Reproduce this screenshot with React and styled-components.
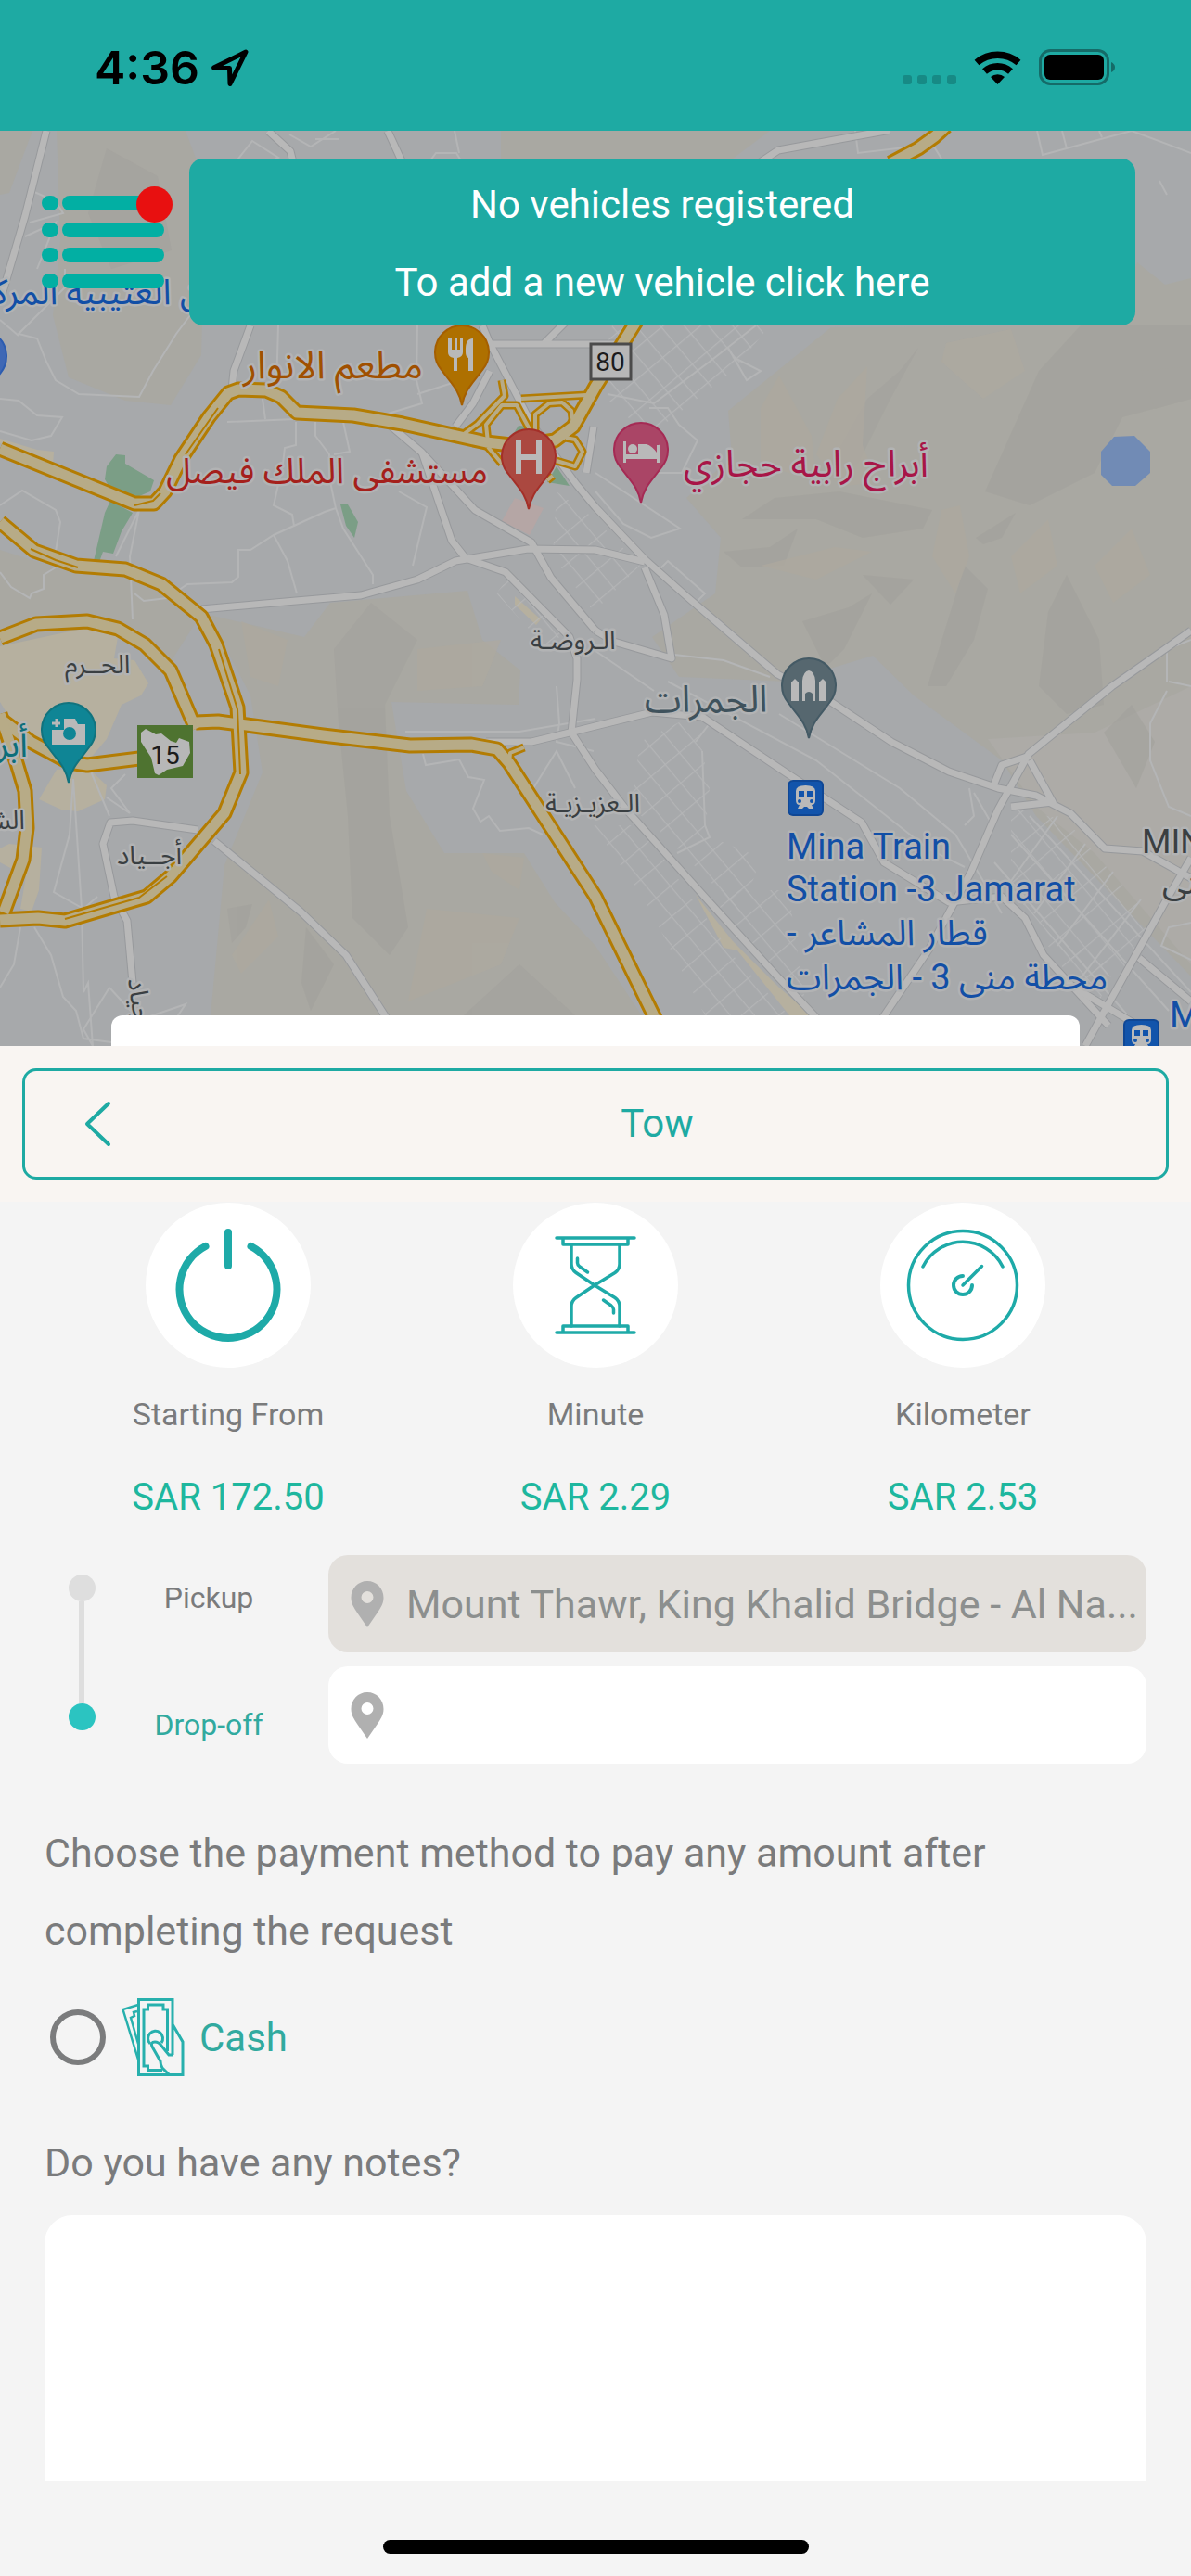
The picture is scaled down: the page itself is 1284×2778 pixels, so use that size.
import React, { useState } from "react";
import styled, { createGlobalStyle } from "styled-components";

const prices = [
    { id: "start", label: "Starting From", value: "SAR 172.50", icon: <PowerIcon /> },
    { id: "minute", label: "Minute", value: "SAR 2.29", icon: <HourglassIcon /> },
    { id: "km", label: "Kilometer", value: "SAR 2.53", icon: <GaugeIcon /> },
];

export default function App() {
    const [pickup] = useState("Mount Thawr, King Khalid Bridge - Al Na...");
    const [dropOff, setDropOff] = useState("");
    const [payment, setPayment] = useState("");
    const [notes, setNotes] = useState("");

    return (
        <>
            <GlobalStyle />
            <Page>
                <StatusBar />
                <MapArea>
                    <CityMap />
                    <MapTop>
                        <MenuButton type="button" aria-label="Menu">
                            <MenuIcon />
                        </MenuButton>
                        <Banner type="button">
                            <span>No vehicles registered</span>
                            <span>To add a new vehicle click here</span>
                        </Banner>
                    </MapTop>
                    <CardEdge />
                </MapArea>
                <ServiceHeader>
                    <ServiceBox>
                        <BackButton type="button" aria-label="Back">
                            <svg width="30" height="52" viewBox="0 0 30 52" fill="none" stroke="#1eaaa3" strokeWidth="4" strokeLinecap="round" strokeLinejoin="round">
                                <path d="M27 4 L4 26 L27 48" />
                            </svg>
                        </BackButton>
                        <ServiceName>Tow</ServiceName>
                    </ServiceBox>
                </ServiceHeader>
                <Prices>
                    {prices.map((price) => (
                        <Price key={price.id}>
                            <PriceIcon>{price.icon}</PriceIcon>
                            <PriceLabel>{price.label}</PriceLabel>
                            <PriceValue>{price.value}</PriceValue>
                        </Price>
                    ))}
                </Prices>
                <Route>
                    <Timeline>
                        <Dot />
                        <Line />
                        <Dot $active />
                    </Timeline>
                    <RouteLabels>
                        <label htmlFor="pickup">Pickup</label>
                        <ActiveLabel htmlFor="dropoff">Drop-off</ActiveLabel>
                    </RouteLabels>
                    <RouteFields>
                        <Field $filled>
                            <PlaceIcon />
                            <input id="pickup" type="text" value={pickup} readOnly />
                        </Field>
                        <Field>
                            <PlaceIcon />
                            <input
                                id="dropoff"
                                type="text"
                                value={dropOff}
                                onChange={(e) => setDropOff(e.target.value)}
                            />
                        </Field>
                    </RouteFields>
                </Route>
                <Payment>
                    <legend>
                        Choose the payment method to pay any amount after completing the request
                    </legend>
                    <PaymentOption>
                        <input
                            type="radio"
                            name="payment"
                            value="cash"
                            checked={payment === "cash"}
                            onChange={(e) => setPayment(e.target.value)}
                        />
                        <CashIcon />
                        <span>Cash</span>
                    </PaymentOption>
                </Payment>
                <Notes>
                    <label htmlFor="notes">Do you have any notes?</label>
                    <textarea id="notes" value={notes} onChange={(e) => setNotes(e.target.value)} />
                </Notes>
                <HomeIndicator>
                    <span />
                </HomeIndicator>
            </Page>
        </>
    );
}

function StatusBar() {
    return (
        <Status>
            <StatusGroup>
                <Clock>4:36</Clock>
                <svg width="42" height="42" viewBox="0 0 42 42" fill="none" stroke="#000" strokeWidth="5" strokeLinejoin="round">
                    <path d="M38 4 L21 38.500 L20.500 21.500 L3.500 21 Z" />
                </svg>
            </StatusGroup>
            <StatusGroup>
                <svg width="230" height="42" viewBox="0 0 230 42">
                    <g fill="#178a85">
                        <rect x="1" y="29" width="10" height="10" rx="3" />
                        <rect x="17" y="29" width="10" height="10" rx="3" />
                        <rect x="33" y="29" width="10" height="10" rx="3" />
                        <rect x="49" y="29" width="10" height="10" rx="3" />
                    </g>
                    <g fill="none" stroke="#000" strokeWidth="7.500">
                        <path d="M81 15.500 A35 35 0 0 1 126 15.500" />
                        <path d="M89.500 25 A21.500 21.500 0 0 1 117.500 25" />
                    </g>
                    <path d="M96 31 A12 12 0 0 1 111 31 L103.500 39 Z" fill="#000" />
                    <rect x="149.500" y="2.500" width="73" height="36" rx="11" fill="none" stroke="#156b68" strokeWidth="3" />
                    <rect x="154" y="7" width="64" height="27" rx="6" fill="#000" />
                    <path d="M226 15 Q230 17 230 20.500 Q230 24 226 26 Z" fill="#156b68" />
                </svg>
            </StatusGroup>
        </Status>
    );
}

function MenuIcon() {
    return (
        <svg width="144" height="114" viewBox="0 0 144 114">
            {[10, 39, 66, 94].map((y) => (
                <g key={y} fill="#02afa3">
                    <rect x="0" y={y} width="18" height="16" rx="8" />
                    <rect x="22" y={y} width="110" height="16" rx="8" />
                </g>
            ))}
            <circle cx="121.500" cy="19.500" r="19.500" fill="#e81010" />
        </svg>
    );
}

function PowerIcon() {
    return (
        <svg viewBox="0 0 178 178" fill="none" stroke="#1eaaa8" strokeWidth="8" strokeLinecap="round">
            <path d="M64.500 47 A52.500 52.500 0 1 0 113.500 47" />
            <path d="M89 32 V68" />
        </svg>
    );
}

function HourglassIcon() {
    return (
        <svg viewBox="0 0 178 178" fill="none" stroke="#1eaaa8" strokeWidth="3.500" strokeLinecap="round" strokeLinejoin="round">
            <path d="M47 38 H131 M54 38 V45 H124 V38" />
            <path d="M47 140 H131 M54 140 V133 H124 V140" />
            <path d="M63 45 V66 Q63 72 68 75.500 L88 89 L68 102.500 Q63 106 63 112 V133" />
            <path d="M115 45 V66 Q115 72 110 75.500 L88 89 L110 102.500 Q115 106 115 112 V133" />
            <path d="M69.500 60 V65 Q69.500 67 72 69 L80.500 75" />
            <path d="M97.500 105 L106 111 Q108.500 113 108.500 115 V119" />
        </svg>
    );
}

function GaugeIcon() {
    return (
        <svg viewBox="0 0 178 178" fill="none" stroke="#1eaaa8" strokeWidth="3.500" strokeLinecap="round">
            <circle cx="89" cy="89" r="58.500" />
            <path d="M46 69 A48 48 0 0 1 132 69" />
            <path d="M89 79 A10 10 0 1 0 99 89" strokeWidth="4" />
            <path d="M89 89 L109.500 68.500" />
        </svg>
    );
}

function PlaceIcon() {
    return (
        <svg width="36" height="50" viewBox="0 0 36 50">
            <path
                d="M18 0 C8 0 0.500 8 0.500 18 C0.500 25 4 29 7 34 L18 50 L29 34 C32 29 35.500 25 35.500 18 C35.500 8 28 0 18 0 Z M18 11 A6.500 6.500 0 1 1 18 24 A6.500 6.500 0 1 1 18 11 Z"
                fill="#b0b0b0"
                fillRule="evenodd"
            />
        </svg>
    );
}

function CashIcon() {
    return (
        <svg width="68" height="84" viewBox="0 0 68 84" fill="none" stroke="#27b0ad" strokeWidth="3">
            <path d="M18 7 L1.500 12 L18 66" strokeWidth="2.500" />
            <path d="M17 14 L13 15 L14 19 L10 21 L18 49" strokeWidth="2.500" />
            <path d="M55 61 V1.500 H18.500 V82.500 H66 V47 L55 28" />
            <path d="M49.500 57 V12 H45 V7 H28.500 V12 H24 V73 H28.500 V77.500 H44" />
            <path d="M31 49 A8 8 0 1 1 43 48" />
            <path d="M51 82 L44 75 Q42 72 42 68 L33 52 Q31 47 36 47 Q40 47 43 51 L51 61 H55" />
        </svg>
    );
}

const cityBlocks = [
    "M660 351 L642 420 L700 470 L790 400 L830 351 Z",
    "M600 530 L642 560 L690 610 L640 660 L596 600 Z",
    "M690 800 L750 770 L765 850 L760 900 L820 925 L800 985 L720 905 L680 870 Z",
    "M550 620 L610 680 L590 700 L535 640 Z",
    "M640 890 L690 890 L790 1030 L850 1095 L760 1095 L700 980 Z",
    "M750 960 L850 960 L870 1095 L830 1040 Z",
    "M1090 870 L1150 885 L1240 990 L1210 1060 L1150 1030 L1090 960 Z",
    "M1120 1000 L1200 1040 L1180 1095 L1130 1020 Z",
];

const hills = [
    "M990 375 L960 430 L925 500 L890 510 L935 430 L970 400 Z",
    "M1120 400 L1165 351 L1284 351 L1284 430 L1210 450 L1180 510 L1110 545 L1062 530 Z",
    "M835 537 L905 530 L1005 550 L995 570 L930 580 L880 560 L800 560 Z",
    "M1052 580 L1095 553 L1080 580 L1060 587 Z",
    "M930 620 L985 625 L960 652 Z",
    "M1040 610 L1065 635 L1050 690 L1020 740 L1000 740 Z",
    "M1150 620 L1185 690 L1190 760 L1150 770 L1120 740 L1130 660 Z",
    "M865 670 L915 655 L940 640 L910 700 L890 720 Z",
    "M360 700 L400 650 L450 690 L415 760 L420 880 L440 1000 L420 1030 L380 990 L375 880 L365 780 Z",
    "M245 980 L272 975 L265 1000 L250 1017 Z",
    "M330 1000 L360 1040 L335 1090 L325 1060 Z",
    "M115 160 L170 190 L185 270 L120 290 L95 230 Z",
    "M500 1095 L560 1040 L620 1095 Z",
    "M1230 400 L1284 395 L1284 430 L1245 441 Z",
    "M780 595 L830 590 L860 570 L845 610 L800 612 Z",
    "M1220 760 L1245 800 L1225 850 L1190 790 Z",
];

const ridges = [
    "M903 430 L935 395 L930 480 L945 520 L905 525 L880 490 Z",
    "M820 440 L840 405 L875 470 L880 520 L820 500 Z",
    "M1020 370 L1090 355 L1105 400 L1060 430 L1015 390 Z",
    "M820 610 L900 590 L940 595 L880 625 Z",
    "M1015 550 L1035 545 L1045 600 L1030 640 L1005 600 Z",
    "M1090 600 L1130 560 L1140 610 L1100 640 Z",
    "M1180 610 L1220 570 L1240 620 L1200 650 Z",
    "M260 670 L310 690 L300 740 L270 730 Z",
    "M450 700 L540 690 L520 740 L450 745 Z",
    "M250 1030 L290 970 L300 1010 L260 1050 Z",
    "M460 980 L560 990 L540 1040 L440 1080 Z",
    "M520 920 L565 925 L560 960 L530 940 Z",
];

const streets = [
    "M37 207 L60 217 L68 230 L32 240 M27 255 L60 240 L40 290 M70 290 L70 310 L20 360 L40 365 L50 390 L60 410 L85 425 L150 428 L165 400 L190 360 L205 340",
    "M0 345 L20 362 M250 180 L272 152 L300 170 L280 180 Z M312 145 L335 158 L362 141 M340 150 L365 150 M455 185 L470 165 L492 165 L510 195 M490 141 L495 165",
    "M0 430 L20 432 L40 448 L67 450 L55 470 L34 475 L0 465 M0 545 L24 529 L60 550 L65 563 L60 595",
    "M245 455 L318 452 M286 452 L283 430 M300 351 L298 420 M450 351 L449 410 L455 435 L405 450 M450 425 L497 410",
    "M319 455 L319 480 L307 483 L305 500 L295 545 L315 555 L317 567 L295 577 L310 605 L320 640 M340 455 L340 470 L355 490 L355 515 L362 548 L350 552 L295 577 L270 593 L257 593 L257 622 L250 628 L202 630 L180 645 L155 648 L145 640",
    "M370 455 L377 487 L360 490 M362 548 L370 570 L402 620 L402 630 M430 530 L460 547 L445 610 M150 550 L140 600 L143 668 M125 600 L150 550 M0 617 L12 633 L32 645 L34 640 L47 635 L47 620 L60 612",
    "M79 840 L75 900 L58 962 L90 980 L105 967 M79 840 L88 980 L90 1070 L95 1060 L100 1128 M98 832 L118 880 M115 860 L140 877 L120 850 L135 835 M22 1000 L15 1040 L0 1065 M37 1000 L55 1030 L68 1075 L82 1090 L90 1120 L120 1124 M118 1065 L90 1110 L100 1128 M118 1065 L150 1100 L200 1083 L170 1128",
    "M437 789 L560 789 L642 775 M456 813 L459 825 L495 819 L505 838 L522 841 L510 872 L518 886 L527 880 L539 896 L570 893 L585 900 M575 850 L600 810 L620 850 M600 740 L603 780 L600 800 L640 810",
    "M655 425 L705 435 L765 390 L815 351 M790 385 L820 400 L805 410 L785 375 M700 440 L720 440 L732 458 L752 475 L735 510 L705 510 M642 510 L733 570 L702 580 L672 565 L642 530 M720 605 L760 640 L750 650 L710 615 Z",
    "M642 702 L705 745 M727 706 L780 712 L830 730 M720 735 L880 820 L1000 915 L1040 935 M750 800 L765 780 M757 810 L760 890 L765 903 L730 920",
    "M1258 735 L1258 700 L1284 690 M1258 745 L1240 780 L1240 820 L1260 870 L1284 880 M1260 735 L1284 740 M1284 995 L1260 1000 L1252 1020 L1284 1035",
    "M1050 855 L1070 890 L1040 950 M1040 890 L1050 880 L1045 850 M1110 880 L1284 1070 M1090 900 L1260 1090 M1072 930 L1220 1100 M1140 880 L1090 950 M1170 910 L1115 985 M1200 940 L1140 1020 M1230 970 L1165 1055",
    "M922 141 L925 165 L1010 155 M1118 141 L1124 167 L1220 141 L1284 165 M1145 141 L1150 160 M1185 141 L1188 148 M1005 155 L1015 171 M1250 195 L1258 210",
    "M840 770 L970 850 L1030 900 L1060 950 L1080 985",
];

const majorRoads = [
    "M520 351 L528 370 L573 457 L622 523 L642 547 L695 603 L740 643 L838 727 L896 757 L961 800 L1023 832 L1076 850 L1117 858 L1154 877 L1191 915 L1232 918 L1284 947",
    "M528 371 H680 M586 371 L612 345",
    "M422 460 L455 488 L512 550 L573 585 L594 623 L642 680",
    "M455 488 L487 583 L502 602 L545 617 L614 687 L622 710 L622 733 L616 790 L642 830 L675 873 L765 973 L838 1053 L892 1110",
    "M217 657 L319 648 L389 642 L450 625 L491 605 L569 592 L642 593 L695 606",
    "M270 351 L252 400 L250 420",
    "M528 400 L510 435 L491 460",
    "M50 141 L27 233 L0 325",
    "M289 141 L313 163 L316 175 M418 141 L436 180",
    "M818 176 L839 162 L960 140",
    "M213 895 L143 885 L119 887 L111 910 L123 967 L137 993 L143 1060",
    "M231 907 L324 983 L373 1030 L418 1100",
    "M524 800 L573 800 L614 790 L642 783 L703 768 L757 773 L847 833 L929 887 L953 930 L1023 973 L1080 967 L1105 990 L1125 1030 L1195 1106",
    "M1284 680 L1256 700 L1199 740 L1109 813 L1076 873 L1047 940 L1002 1023 L950 1100",
    "M1284 925 L1256 973 L1187 1097 L1170 1128 M1228 1033 L1284 1080 M1150 1060 L1225 1105",
    "M695 612 L716 663 L724 710 L662 692 L642 680 M1110 820 L1135 865 L1090 870 M1070 850 L1080 825 L1110 815",
    "M640 460 L632 510",
];

const highways = [
    "M0 484 L145 543 L166 543 L178 530 L195 495 L225 450 L246 424 L257 420 L287 421 L303 428 L320 445 L381 448 L434 457 L524 477 L560 481 L598 475 L618 460 L642 417 L687 345",
    "M960 176 L990 160 L1008 147 L1020 136",
    "M0 563 L37 594 L82 610 L135 614 L174 630 L217 665 L233 695 L256 763 L260 833 L242 877 L184 945 L158 967 L70 993 L41 990 L0 992",
    "M0 688 L39 673 L94 670 L127 678 L156 695 L184 723 L211 786",
    "M211 779 L235 778 L266 782 L348 793 L442 804 L508 803 L536 808 L549 823 L642 967 L712 1110",
    "M0 775 L33 800 L74 822 L94 825 L150 818",
    "M0 770 L18 823 L27 853 L29 893 L25 927 L4 984",
];

const ramps = [
    "M500 468 L515 457 L544 427 L541 410 M526 477 L524 458 L541 437 L557 437 L572 465 L560 480",
    "M562 430 L632 426 M577 467 L577 447 L592 435 L606 434 L616 443 L618 458",
    "M610 472 L620 474 L628 487 L620 503 L600 497 M526 482 L541 500 M596 513 L590 518",
    "M549 823 L550 812 L565 806",
];

const pins = [
    { x: 498, y: 380, fill: "#ae7000", stroke: "#a55f00", icon: "food" },
    { x: 570, y: 492, fill: "#ab4840", stroke: "#a42f28", icon: "hospital" },
    { x: 691, y: 485, fill: "#aa4566", stroke: "#a52a54", icon: "hotel" },
    { x: 872, y: 739, fill: "#56676f", stroke: "#445a65", icon: "mosque" },
    { x: 74, y: 787, fill: "#0f8595", stroke: "#11737e", icon: "camera" },
    { x: -22, y: 384, fill: "#3f68b5", stroke: "#2c5cb0" },
];

const places = [
    { x: 220, y: 328, size: 38, color: "#124fa6", text: "ن العتيبية المركز", anchor: "end" },
    { x: 456, y: 408, size: 41, color: "#a05000", text: "مطعم الانوار", anchor: "end" },
    { x: 526, y: 521, size: 38, color: "#a5201b", text: "مستشفى الملك فيصل", anchor: "end" },
    { x: 737, y: 514, size: 40, color: "#a81547", text: "أبراج رابية حجازي" },
    { x: 572, y: 700, size: 28, color: "#3a3f42", text: "الـروضـة" },
    { x: 70, y: 726, size: 28, color: "#3a3f42", text: "الحــرم" },
    { x: 695, y: 768, size: 40, color: "#3f525c", text: "الجمرات" },
    { x: 588, y: 876, size: 28, color: "#3a3f42", text: "الـعزيـزيـة" },
    { x: 126, y: 932, size: 28, color: "#3a3f42", text: "أجــياد" },
    { x: 27, y: 894, size: 28, color: "#3a3f42", text: "الشـ", anchor: "end" },
    { x: 30, y: 816, size: 38, color: "#0c6e7a", text: "أبر", anchor: "end" },
    { x: 848, y: 926, size: 38, color: "#124fa6", text: "Mina Train" },
    { x: 848, y: 972, size: 38, color: "#124fa6", text: "Station -3 Jamarat" },
    { x: 848, y: 1019, size: 38, color: "#124fa6", text: "- قطار المشاعر" },
    { x: 848, y: 1067, size: 38, color: "#124fa6", text: "محطة منى 3 - الجمرات" },
    { x: 1231, y: 920, size: 36, color: "#3a3f42", text: "MINA" },
    { x: 1253, y: 964, size: 36, color: "#3a3f42", text: "منى" },
    { x: 1261, y: 1108, size: 38, color: "#124fa6", text: "Mina" },
];

function CityMap() {
    return (
        <MapDrawing viewBox="0 141 1284 987" preserveAspectRatio="xMidYMid slice" role="img" aria-label="Map">
            <defs>
                <pattern id="grid" width="26" height="20" patternUnits="userSpaceOnUse" patternTransform="rotate(50)">
                    <path d="M0 0 H26 M0 0 V20" fill="none" stroke="#b7b8b9" strokeWidth="2.500" />
                </pattern>
            </defs>
            <rect x="0" y="141" width="1284" height="987" fill="#a7a9ab" />

            {/* terrain */}
            <g fill="#a9a8a2">
                <path d="M61 141 H200 L222 200 L217 383 L184 437 L135 432 L74 407 L57 340 L65 260 Z" />
                <path d="M0 141 H35 L10 208 L0 210 Z M540 141 H830 L790 171 H540 Z" />
                <path d="M896 353 L785 443 L789 493 L740 537 L777 580 L771 640 L703 687 L732 730 L850 735 L908 717 L941 707 L985 750 L1080 820 L1117 880 L1284 1053 V300 L1256 307 L1226 283 L1200 351 Z" />
                <path d="M225 663 L328 687 L356 650 L504 637 L520 690 L561 723 L559 760 L422 757 L438 853 L479 920 L565 920 L598 973 L642 1020 L695 1100 L720 1128 H224 L242 933 L283 833 L270 750 Z" />
                <path d="M0 593 L60 612 L135 614 L217 662 L180 720 L120 680 L0 700 Z" />
            </g>
            <path d="M1065 797 L1180 790 L1284 740 V1040 L1180 920 L1117 870 Z" fill="#adaba7" />
            <g fill="#a1a09b" opacity="0.500">
                {hills.map((d) => <path key={d} d={d} />)}
            </g>
            <g fill="#aea99f" opacity="0.700">
                {ridges.map((d) => <path key={d} d={d} />)}
            </g>
            <g fill="#b6b09f">
                <path d="M0 697 L94 677 L127 687 L123 710 L145 712 L160 737 L152 750 L131 760 L115 797 L98 817 L60 822 L20 790 L0 757 Z" />
                <path d="M61 830 L95 828 L115 847 L113 862 L84 875 L66 873 L42 862 Z" />
                <path d="M10 910 L45 914 L42 960 L34 983 L22 980 L28 945 L0 930 V915 Z" />
                <path d="M750 965 L790 1015 L840 1065 L875 1095 L855 1100 L795 1025 L780 1022 Z M555 643 L583 668 L578 674 L555 652 Z" />
                <path d="M0 473 L40 485 L58 487 L57 502 L0 478 Z" />
            </g>
            <g fill="#7b9e86">
                <path d="M125 490 L135 491 L135 500 L166 518 L162 530 L143 538 L119 527 L113 517 L115 503 Z" />
                <path d="M119 540 L143 553 L131 573 L122 597 L111 595 L107 606 L101 605 L113 553 Z" />
                <path d="M367 544 L375 544 L386 563 L382 580 L373 567 Z" />
                <path d="M559 459 L569 460 L572 478 L547 478 Z M600 503 L614 524 L590 520 Z" />
            </g>
            <path d="M555 537 L586 548 L571 577 L541 562 Z" fill="#b5a6a5" />
            <path d="M1201 471 L1223 470 L1240 487 L1240 510 L1224 524 L1199 524 L1187 512 L1187 487 Z" fill="#718bb5" />

            {/* roads */}
            <g fill="url(#grid)" opacity="0.800">
                {cityBlocks.map((d) => <path key={d} d={d} />)}
            </g>
            <g fill="none" stroke="#b4b5b6" strokeWidth="2">
                {streets.map((d) => <path key={d} d={d} />)}
            </g>
            <g fill="none" strokeLinejoin="round">
                <g stroke="#97999c" strokeWidth="9">
                    {majorRoads.map((d) => <path key={d} d={d} />)}
                </g>
                <g stroke="#b8b8b8" strokeWidth="7">
                    {majorRoads.map((d) => <path key={d} d={d} />)}
                </g>
                <g stroke="#b37c02" strokeWidth="9">
                    {ramps.map((d) => <path key={d} d={d} />)}
                </g>
                <g stroke="#b37c02" strokeWidth="17">
                    {highways.map((d) => <path key={d} d={d} />)}
                </g>
                <g stroke="#b7ab87" strokeWidth="4">
                    {ramps.map((d) => <path key={d} d={d} />)}
                </g>
                <g stroke="#b7ab87" strokeWidth="11">
                    {highways.map((d) => <path key={d} d={d} />)}
                </g>
                <path
                    d="M33 592 L60 604 L84 612 M70 991 L150 968 L180 945 M236 700 L256 765 L259 835 M145 545 L165 540 L173 532 M200 490 L235 440"
                    stroke="#b37c02"
                    strokeWidth="2"
                />
            </g>

            {/* road shields */}
            <rect x="637" y="371" width="43" height="38" fill="#b7b7b7" stroke="#4b4b4b" strokeWidth="3" />
            <ShieldText x="658" y="400">80</ShieldText>
            <rect x="148" y="782" width="60" height="57" fill="#4e7330" />
            <path d="M152 790 L157 786 L168 792 L174 791 L184 799 L190 801 L193 796 L204 800 L205 812 L197 826 L180 830 L171 836 L167 834 L163 817 L152 800 Z" fill="#b7b7b7" />
            <ShieldText x="178" y="824">15</ShieldText>

            {/* labels */}
            {places.map((place) => (
                <PlaceName
                    key={place.x + "-" + place.y}
                    x={place.x}
                    y={place.y}
                    fontSize={place.size}
                    fill={place.color}
                    textAnchor={place.anchor || "start"}
                >
                    {place.text}
                </PlaceName>
            ))}
            <PlaceName x="138" y="1056" fontSize="28" fill="#3a3f42" transform="rotate(82 138 1056)">
                أجياد
            </PlaceName>

            <TrainStop x={849} y={841} />
            <TrainStop x={1211} y={1099} />
            {pins.map((pin) => (
                <g key={pin.x} transform={`translate(${pin.x} ${pin.y})`}>
                    <path
                        d="M0 57 C-3 40 -12 33 -22 19 A29 29 0 1 1 22 19 C12 33 3 40 0 57 Z"
                        fill={pin.fill}
                        stroke={pin.stroke}
                        strokeWidth="2"
                    />
                    <PinSymbol name={pin.icon} />
                </g>
            ))}
        </MapDrawing>
    );
}

function PinSymbol({ name }) {
    switch (name) {
        case "food":
            return (
                <g fill="#b9b9b9">
                    <path d="M-15 -15 V0 Q-15 5 -9 6 V20 H-5 V6 Q1 5 1 0 V-15 H-2 V-3 H-5 V-15 H-8 V-3 H-11 V-15 Z" />
                    <path d="M12 -15 Q3 -15 4 0 Q4 5 7 6 V20 H12 Z" />
                </g>
            );
        case "hospital":
            return <path d="M-11 -17 V19 M11 -17 V19 M-11 1 H11" stroke="#b9b9b9" strokeWidth="6" fill="none" />;
        case "hotel":
            return (
                <g fill="#b9b9b9">
                    <path d="M-19 -9 H-16 V5 H17 V-5 H20 V14 H17 V10 H-16 V14 H-19 Z" />
                    <circle cx="-9" cy="-1" r="5" />
                    <path d="M-3 -6 H6 Q12 -4 17 3 L20 -6 V5 H-3 Z" />
                </g>
            );
        case "mosque":
            return (
                <g fill="#b9b9b9">
                    <path d="M-7 17 V-5 Q-6 -15 0 -16 Q6 -15 7 -5 V17 H4 V9 Q0 5 -4 9 V17 Z" />
                    <path d="M-19 17 V-3 L-15 -7 L-11 -3 V17 Z M11 17 V-3 L15 -7 L19 -3 V17 Z" />
                </g>
            );
        case "camera":
            return (
                <g>
                    <path d="M-18 16 V0 H-5 V-12 H7 L10 -6 H18 V16 Z" fill="#b9b9b9" />
                    <path d="M-13 -12 V-3 M-18 -7 H-9" stroke="#b9b9b9" strokeWidth="3" />
                    <circle cx="1" cy="4" r="7" fill="#0f8595" />
                </g>
            );
        default:
            return null;
    }
}

function TrainStop({ x, y }) {
    return (
        <g transform={`translate(${x} ${y})`}>
            <rect width="39" height="39" rx="6" fill="#0f4795" />
            <rect x="2" y="2" width="35" height="35" rx="4" fill="#1254ab" />
            <path d="M9 12 Q9 6 19.500 6 Q30 6 30 12 V22 Q30 27 26 27 L28 31 H23 L21 29 H18 L16 31 H11 L13 27 Q9 27 9 22 Z" fill="#b9b9b9" />
            <path d="M12 12 H18 V18 H12 Z M21 12 H27 V18 H21 Z" fill="#1254ab" />
            <circle cx="13" cy="23" r="2" fill="#1254ab" />
            <circle cx="26" cy="23" r="2" fill="#1254ab" />
        </g>
    );
}

const GlobalStyle = createGlobalStyle`
  * {
    box-sizing: border-box;
  }
  body {
    margin: 0;
    background-color: #f4f4f4;
  }
  body, button, input, textarea {
    font-family: Roboto, "Noto Sans", sans-serif;
    font-weight: 400;
  }
`;

const Page = styled.div`
  display: flex;
  flex-direction: column;
  min-height: 100vh;
  color: #7a7b7c;
  font-size: 43px;
`;

const Status = styled.header`
  display: flex;
  align-items: center;
  justify-content: space-between;
  height: 141px;
  padding: 4px 82px 0 102px;
  background-color: #1eaaa3;
`;

const StatusGroup = styled.div`
  display: flex;
  align-items: center;
  gap: 12px;
`;

const Clock = styled.span`
  font-family: Inter, Roboto, sans-serif;
  font-size: 50px;
  font-weight: 600;
  line-height: 60px;
  color: #000;
`;

const MapArea = styled.section`
  position: relative;
  display: flex;
  flex-direction: column;
  justify-content: space-between;
  height: 987px;
  overflow: hidden;
`;

const MapDrawing = styled.svg`
  position: absolute;
  inset: 0;
  width: 100%;
  height: 100%;
`;

const PlaceName = styled.text`
  font-family: Roboto, "Noto Sans Arabic", "Noto Sans", "DejaVu Sans", sans-serif;
  font-weight: 400;
  paint-order: stroke;
  stroke: #b2b3b4;
  stroke-width: 5px;
  stroke-linejoin: round;
`;

const ShieldText = styled.text`
  font-family: Roboto, sans-serif;
  font-size: 28px;
  font-weight: 400;
  text-anchor: middle;
  fill: #1c1c1c;
`;

const MapTop = styled.div`
  position: relative;
  display: flex;
  align-items: flex-start;
  gap: 15px;
  padding: 30px 60px 0 45px;
`;

const MenuButton = styled.button`
  padding: 30px 0 0;
  border: none;
  background: none;
  cursor: pointer;
  svg {
    display: block;
  }
`;

const Banner = styled.button`
  display: flex;
  flex: 1;
  flex-direction: column;
  align-items: center;
  padding: 8px 0 4px;
  border: none;
  border-radius: 15px;
  background-color: #1eaaa3;
  color: #fff;
  font-size: 42px;
  line-height: 84px;
  cursor: pointer;
`;

const CardEdge = styled.div`
  position: relative;
  height: 33px;
  margin: 0 120px;
  border-radius: 12px 12px 0 0;
  background-color: #fff;
`;

const ServiceHeader = styled.div`
  padding: 24px;
  background-color: #f9f5f2;
`;

const ServiceBox = styled.div`
  display: flex;
  align-items: center;
  height: 120px;
  border: 3px solid #1eaaa3;
  border-radius: 15px;
`;

const BackButton = styled.button`
  display: flex;
  align-items: center;
  justify-content: center;
  width: 133px;
  height: 100%;
  padding: 0 0 0 22px;
  border: none;
  background: none;
  cursor: pointer;
`;

const ServiceName = styled.h1`
  flex: 1;
  margin: 0;
  color: #1eaaa3;
  font-size: 42px;
  font-weight: 400;
  line-height: 56px;
  text-align: center;
`;

const Prices = styled.ul`
  display: grid;
  grid-template-columns: repeat(3, 1fr);
  margin: 0;
  padding: 1px 48px 34px;
  list-style: none;
`;

const Price = styled.li`
  display: flex;
  flex-direction: column;
  align-items: center;
`;

const PriceIcon = styled.div`
  width: 178px;
  height: 178px;
  border-radius: 50%;
  background-color: #fff;
`;

const PriceLabel = styled.span`
  margin-top: 26px;
  font-size: 34px;
  line-height: 48px;
`;

const PriceValue = styled.span`
  margin-top: 38px;
  color: #1eb79e;
  font-size: 40px;
  line-height: 56px;
`;

const Route = styled.div`
  display: grid;
  grid-template-columns: 80px 226px 1fr;
  padding: 0 48px;
`;

const Timeline = styled.div`
  display: flex;
  flex-direction: column;
  align-items: center;
  padding: 21px 0 36px;
`;

const Dot = styled.span`
  width: 29px;
  height: 29px;
  border-radius: 50%;
  background-color: ${(props) => (props.$active ? "#2bc4c1" : "#dedede")};
`;

const Line = styled.span`
  flex: 1;
  width: 6px;
  background-color: #dedede;
`;

const RouteLabels = styled.div`
  display: flex;
  flex-direction: column;
  justify-content: space-between;
  align-items: center;
  padding: 18px 32px 14px 0;
  font-size: 32px;
  line-height: 56px;
`;

const ActiveLabel = styled.label`
  color: #31aa9f;
`;

const RouteFields = styled.div`
  display: flex;
  flex-direction: column;
  gap: 15px;
`;

const Field = styled.div`
  display: flex;
  align-items: center;
  gap: 24px;
  height: 105px;
  padding: 0 3px 0 24px;
  border-radius: 21px;
  background-color: ${(props) => (props.$filled ? "#e3e0dc" : "#fff")};
  svg {
    flex-shrink: 0;
  }
  input {
    flex: 1;
    min-width: 0;
    padding: 0;
    border: none;
    outline: none;
    background: none;
    color: #8c8f8e;
    font-size: 43px;
    line-height: 56px;
    text-overflow: ellipsis;
  }
`;

const Payment = styled.fieldset`
  margin: 54px 48px 0;
  padding: 0;
  border: none;
  legend {
    width: 100%;
    padding: 0;
    line-height: 84px;
  }
`;

const PaymentOption = styled.label`
  display: flex;
  align-items: center;
  margin-top: 31px;
  color: #31aa9f;
  font-size: 42px;
  cursor: pointer;
  input {
    appearance: none;
    width: 60px;
    height: 60px;
    margin: 0 17px 0 6px;
    border: 6px solid #7b7c7d;
    border-radius: 50%;
    &:checked {
      background-color: #1eaaa3;
      box-shadow: inset 0 0 0 8px #f4f4f4;
    }
  }
  span {
    margin-left: 16px;
  }
`;

const Notes = styled.div`
  display: flex;
  flex: 1;
  flex-direction: column;
  gap: 15px;
  margin: 51px 48px 0;
  line-height: 84px;
  textarea {
    flex: 1;
    min-height: 287px;
    padding: 30px;
    border: none;
    border-radius: 30px 30px 0 0;
    outline: none;
    background-color: #fff;
    font-size: 43px;
    line-height: 56px;
    resize: none;
  }
`;

const HomeIndicator = styled.footer`
  display: flex;
  justify-content: center;
  padding: 63px 0 24px;
  span {
    width: 459px;
    height: 15px;
    border-radius: 8px;
    background-color: #000;
  }
`;
